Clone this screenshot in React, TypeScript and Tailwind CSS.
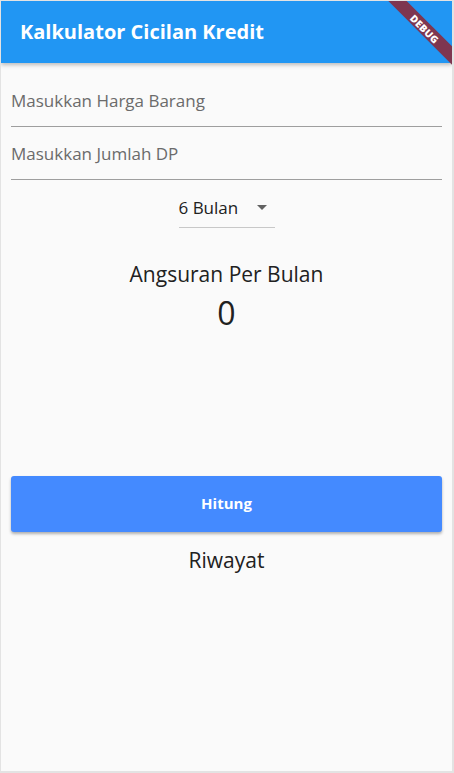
import { useState } from "react";

const font = { fontFamily: '"Open Sans", "Noto Sans", sans-serif' };

export default function App() {
  const [harga, setHarga] = useState("");
  const [dp, setDp] = useState("");

  return (
    <div
      className="relative h-[773px] w-[454px] overflow-hidden border-t border-l border-r-2 border-b-2 border-[#e3e3e3] bg-[#fafafa]"
      style={font}
    >
      {/* App bar */}
      <div className="relative z-10 flex h-[62px] items-center bg-[#2196f3] px-[19px] shadow-[0_2px_4px_rgba(0,0,0,0.25)]">
        <h1 className="text-[20px] font-bold text-white">Kalkulator Cicilan Kredit</h1>
      </div>

      {/* Debug ribbon */}
      <div className="pointer-events-none absolute top-0 right-0 z-20 h-[80px] w-[80px] overflow-hidden">
        <div className="absolute top-[21px] right-[-33px] flex h-[13px] w-[120px] rotate-45 items-center justify-center bg-[#7e3650]">
          <span className="text-[10px] font-extrabold leading-none tracking-wide text-white">DEBUG</span>
        </div>
      </div>

      <div className="flex flex-col px-[10px]">
        <input
          value={harga}
          onChange={(e) => setHarga(e.target.value)}
          placeholder="Masukkan Harga Barang"
          className="h-[64px] w-full border-b border-[#9e9e9e] bg-transparent pt-[12px] text-[17px] text-[#212121] outline-none placeholder:text-[#6b6b6b]"
        />
        <input
          value={dp}
          onChange={(e) => setDp(e.target.value)}
          placeholder="Masukkan Jumlah DP"
          className="h-[53px] w-full border-b border-[#9e9e9e] bg-transparent pt-[1px] text-[17px] text-[#212121] outline-none placeholder:text-[#6b6b6b]"
        />

        <div className="flex justify-center pt-[15px]">
          <div className="flex w-[96px] items-center justify-between border-b border-[#c8c8c8] pb-[6px]">
            <span className="text-[17px] text-[#212121]">6 Bulan</span>
            <svg width="10" height="5" viewBox="0 0 10 5" className="mr-[8px]">
              <path d="M0 0 L10 0 L5 5 Z" fill="#616161" />
            </svg>
          </div>
        </div>

        <div className="mt-[32px] flex flex-col items-center text-[#212121]">
          <span className="text-[21px] leading-[28px]">Angsuran Per Bulan</span>
          <span className="mt-[4px] text-[32px] leading-[42px]">0</span>
        </div>

        <button className="mt-[142px] h-[56px] w-full rounded-[3px] bg-[#448aff] text-[15px] font-bold text-white shadow-[0_2px_3px_rgba(0,0,0,0.3)]">
          Hitung
        </button>

        <div className="mt-[13px] text-center text-[21px] text-[#212121]">Riwayat</div>
      </div>
    </div>
  );
}
